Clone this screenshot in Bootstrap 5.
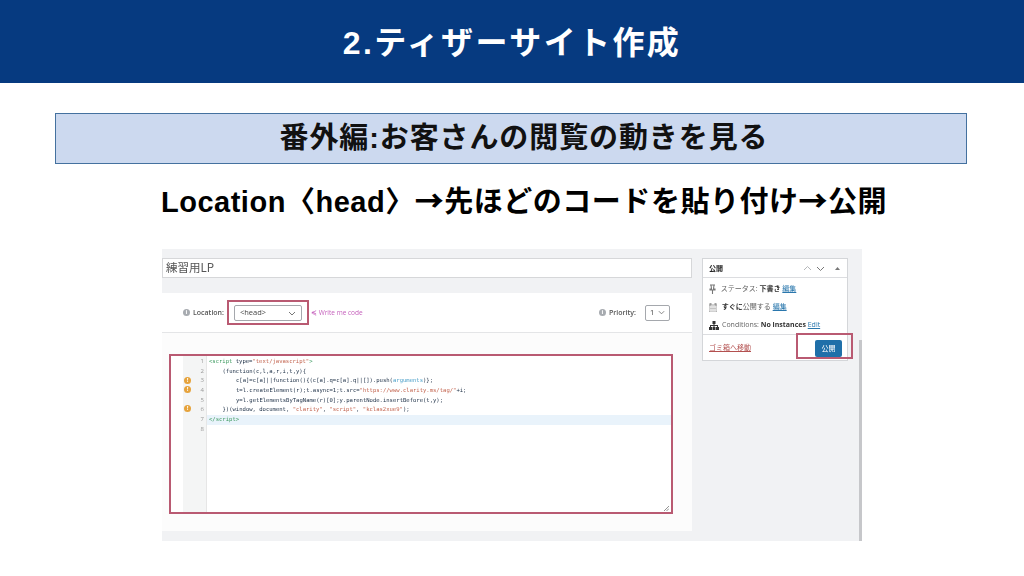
<!DOCTYPE html>
<html lang="ja">
<head>
<meta charset="utf-8">
<title>2.ティザーサイト作成</title>
<link href="https://cdn.jsdelivr.net/npm/bootstrap@5.3.0/dist/css/bootstrap.min.css" rel="stylesheet">
<style>
html,body{width:1024px;height:576px;overflow:hidden;background:#fff}
body{font-family:"Liberation Sans","Noto Sans CJK JP",sans-serif;color:#000}
.banner{height:83px;padding-top:2px;background:#063a80;color:#fff;font-size:32px;font-weight:700;letter-spacing:2.4px}
.subband{width:912px;height:51px;margin:30px 0 0 55px;padding:1px 0 0 26px;background:#ccd9ef;border:1px solid #44719f;font-size:29px;font-weight:700;letter-spacing:.9px;color:#111}
.headline{height:38px;margin-top:19px;padding-left:24px;font-size:29px;font-weight:700;line-height:32px;letter-spacing:.52px}
.arw{font-family:"Noto Sans CJK JP",sans-serif;font-weight:900}
.shot{width:700px;height:292px;margin:28px 0 0 162px;background:#f1f2f4;position:relative;filter:blur(.45px);font-family:"Open Sans","Noto Sans CJK JP",sans-serif;color:#444}
.maincol{width:530px;padding-top:9px}
.titlebox{height:20px;background:#fff;border:1px solid #d6d7d9;font-size:11.5px;line-height:16px;padding-left:3px;color:#555;font-family:"Noto Sans CJK JP",sans-serif}
.panel{height:238px;margin-top:15px;background:#fcfcfc}
.panelhead{height:40px;border-bottom:1px solid #e4e5e7;padding:0 22px 0 21px;font-size:7px;background:#fff}
.info{width:7px;height:7px;border-radius:50%;background:#a7abb0;color:#fff;font-size:6px;line-height:7px;text-align:center;margin-right:3px;font-weight:700}
.lbl{font-weight:600;color:#555;padding-top:2px}
.redbox{border:2px solid #b95a72}
.selbox{margin-left:3px;width:82px;height:25px;padding:3px 5px}
.fakesel{height:16px;background:#fff;border:1px solid #a5a8ad;border-radius:2px;font-size:7.5px;padding:0 5px;color:#444}
.wm{color:#c560bc;font-size:6.5px;margin-left:2px}
.prisel{width:25px;height:16px;background:#fff;border:1px solid #a5a8ad;border-radius:2px;font-size:7.5px;padding:0 4px;margin-left:9px}
.codebox{width:504px;height:160px;margin:21px 0 0 7px;background:#fff;position:relative}
.gutter{width:36px;padding-left:12px}
.gutterin{background:#f4f5f5;border-right:1px solid #e6e6e6}
.marks{width:9px;padding:1px 0 0 1px}
.nums{width:14px;font-size:6px;color:#999;text-align:right;padding:1px 2px 0 0;line-height:9.700px}
.nums div,.marks div,.codeline{height:9.700px}
.warn{width:7px;height:7px!important;margin:1px 0 1.700px 0;border-radius:50%;background:#e6a33c;color:#fff;font-size:6px;line-height:7px;text-align:center;font-weight:700}
.code{padding-top:1px;font:5.55px/9.7px "DejaVu Sans Mono",monospace;color:#22344a;white-space:pre}
.codeline{padding-left:2px}
.ind1{padding-left:15.5px}.ind2{padding-left:29px}
.hl{background:#e9f3fb}
.tg{color:#3c9a5f}.st{color:#c3644f}.ar{color:#4a9fc9}
.grip{position:absolute;right:2px;bottom:1px;width:6px;height:6px}
.sidecol{width:146px;margin:9px 0 0 10px}
.sidebox{height:103px;background:#fff;border:1px solid #d4d6d9;position:relative;font-size:7px}
.sidehead{height:19px;border-bottom:1px solid #dcdde0;padding:0 6px;font-weight:700;font-size:7px;color:#222;font-family:"Noto Sans CJK JP",sans-serif}
.siderow{height:18px;padding-left:6px;gap:3px;white-space:nowrap;color:#666}
.toprow{margin-top:2px}
.siderow b{color:#333}
.wlink{color:#2a77ad;text-decoration:underline}
.sidefoot{height:28px;border-top:1px solid #dcdde0;padding:0 5px 0 6px}
.trash{color:#b3504f;text-decoration:underline;font-size:7px}
.pub{width:27px;height:17px;background:#1f6fa9;color:#fff;border-radius:2px;font-size:7px;padding:0;border:0;line-height:17px;text-align:center}
.pubmark{position:absolute;left:93px;top:74px;width:57px;height:26px}
.sbar{position:absolute;right:0;top:91px;bottom:0;width:3px;background:#c6c7ca}
</style>
</head>
<body>
<div class="banner d-flex align-items-center justify-content-center">2.ティザーサイト作成</div>
<div class="subband d-flex align-items-center justify-content-center">番外編:お客さんの閲覧の動きを見る</div>
<div class="headline text-center">Location〈head〉<span class="arw">→</span>先ほどのコードを貼り付け<span class="arw">→</span>公開</div>

<div class="shot d-flex align-items-start">
  <div class="maincol">
    <div class="titlebox">練習用LP</div>
    <div class="panel">
      <div class="panelhead d-flex align-items-center">
        <span class="info">i</span><span class="lbl">Location:</span>
        <div class="selbox redbox">
          <div class="fakesel d-flex align-items-center justify-content-between"><span>&lt;head&gt;</span>
            <svg width="8" height="5" viewBox="0 0 8 5"><path d="M1 1l3 3 3-3" fill="none" stroke="#777" stroke-width="1"/></svg></div>
        </div>
        <span class="wm">≼ Write me code</span>
        <span class="info ms-auto">i</span><span class="lbl">Priority:</span>
        <div class="prisel d-flex align-items-center justify-content-between"><span>1</span>
          <svg width="7" height="5" viewBox="0 0 8 5"><path d="M1 1l3 3 3-3" fill="none" stroke="#777" stroke-width="1"/></svg></div>
      </div>
      <div class="codebox redbox d-flex align-items-stretch">
        <div class="gutter d-flex">
          <div class="gutterin d-flex">
          <div class="marks">
            <div></div><div></div><div class="warn">!</div><div class="warn">!</div><div></div><div class="warn">!</div>
          </div>
          <div class="nums"><div>1</div><div>2</div><div>3</div><div>4</div><div>5</div><div>6</div><div>7</div><div>8</div></div>
          </div>
        </div>
        <div class="code flex-grow-1"><div class="codeline"><span class="tg">&lt;script</span> type=<span class="st">"text/javascript"</span><span class="tg">&gt;</span></div><div class="codeline ind1">(function(c,l,a,r,i,t,y){</div><div class="codeline ind2">c[a]=c[a]||function(){(c[a].q=c[a].q||[]).push(<span class="ar">arguments</span>)};</div><div class="codeline ind2">t=l.createElement(r);t.async=1;t.src=<span class="st">"https://www.clarity.ms/tag/"</span>+i;</div><div class="codeline ind2">y=l.getElementsByTagName(r)[0];y.parentNode.insertBefore(t,y);</div><div class="codeline ind1">})(window, document, <span class="st">"clarity"</span>, <span class="st">"script"</span>, <span class="st">"kclas2xue9"</span>);</div><div class="codeline hl"><span class="tg">&lt;/script&gt;</span></div><div class="codeline"></div></div>
        <svg class="grip" viewBox="0 0 6 6"><path d="M1 6l5-5M3.500 6L6 3.500" stroke="#777" stroke-width=".8"/></svg>
      </div>
    </div>
  </div>
  <div class="sidecol">
    <div class="sidebox">
      <div class="sidehead d-flex align-items-center justify-content-between"><span>公開</span>
        <svg width="38" height="7" viewBox="0 0 38 7"><path d="M1 5l3.500-3.500L8 5" fill="none" stroke="#b5b7ba" stroke-width="1"/><path d="M14 2l3.500 3.500L21 2" fill="none" stroke="#777" stroke-width="1"/><path d="M32 5h5l-2.500-3z" fill="#777"/></svg>
      </div>
      <div class="siderow toprow d-flex align-items-center">
        <svg width="7" height="10" viewBox="0 0 7 10"><path d="M1 1h5M2 1l.5 4H1v1h5V5H4.500L5 1M3.500 6v4" fill="none" stroke="#777" stroke-width="1.100"/></svg>
        <span>&nbsp;ステータス: <b>下書き</b> <span class="wlink">編集</span></span>
      </div>
      <div class="siderow d-flex align-items-center">
        <svg width="8" height="9" viewBox="0 0 8 9"><path d="M0 2h8v7H0zM1 0h1v2H1zM6 0h1v2H6z" fill="none" stroke="#8a8a8a" stroke-width=".8"/><path d="M1 4h6M1 5.500h6M1 7h6" stroke="#aaa" stroke-width=".7"/></svg>
        <span>&nbsp;<b>すぐに</b>公開する <span class="wlink">編集</span></span>
      </div>
      <div class="siderow d-flex align-items-center">
        <svg width="10" height="9" viewBox="0 0 10 9"><path d="M3.500 0h3v3h-3zM0 6h3v3H0zM3.500 6h3v3h-3zM7 6h3v3H7zM1 6V4h8v2H8V5H5.500v1h-1V5H2v1zM4.500 3h1v2h-1z" fill="#333"/></svg>
        <span>Conditions: <b>No instances</b> <span class="wlink">Edit</span></span>
      </div>
      <div class="sidefoot d-flex align-items-center justify-content-between">
        <span class="trash">ゴミ箱へ移動</span>
        <span class="pub">公開</span>
      </div>
      <div class="pubmark redbox"></div>
    </div>
  </div>
  <div class="sbar"></div>
</div>
<script src="https://cdn.jsdelivr.net/npm/bootstrap@5.3.0/dist/js/bootstrap.bundle.min.js"></script>
</body>
</html>
